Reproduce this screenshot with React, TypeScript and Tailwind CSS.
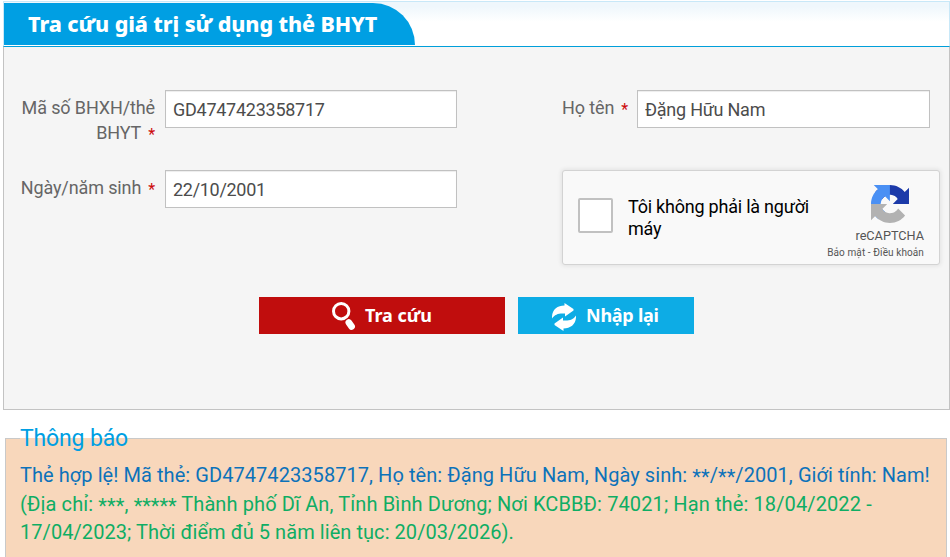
import type { ReactNode } from "react";

function Label({ children, className }: { children: ReactNode; className: string }) {
  return (
    <label className={`block shrink-0 whitespace-nowrap text-right text-[18px] leading-[25px] tracking-[-0.120px] text-[#666] ${className}`}>
      {children}
    </label>
  );
}

function Required({ className }: { className: string }) {
  return <span className={`relative top-px text-[16px] leading-none text-[#cc0a0a] ${className}`}>*</span>;
}

function TextField({ value, className }: { value: string; className: string }) {
  return (
    <input
      defaultValue={value}
      className={`h-[38px] border border-[#c1c1c1] bg-white pl-[7px] pt-px text-[18px] text-[#4c4c4c] shadow-[inset_0_1px_1px_rgba(0,0,0,0.075)] outline-none ${className}`}
    />
  );
}

function Masked({ children, className }: { children: ReactNode; className?: string }) {
  return <span className={`relative top-[2px] ${className ?? ""}`}>{children}</span>;
}

function RecaptchaLogo() {
  return (
    <svg width="38" height="38" viewBox="0 0 64 64" className="block">
      <path
        d="M64 31.955l-.033-1.37V4.687l-7.16 7.16C50.948 4.674 42.033.093 32.05.093c-10.4 0-19.622 4.96-25.458 12.64l11.736 11.86a15.55 15.55 0 0 1 4.754-5.334c2.05-1.6 4.952-2.906 8.968-2.906.485 0 .86.057 1.135.163 4.976.393 9.288 3.14 11.828 7.124l-8.307 8.307L64 31.953"
        fill="#1c3aa9"
      />
      <path
        d="M31.862.094l-1.37.033H4.594l7.16 7.16C4.58 13.147 0 22.06 0 32.046c0 10.4 4.96 19.622 12.64 25.458L24.5 45.768a15.55 15.55 0 0 1-5.334-4.754c-1.6-2.05-2.906-4.952-2.906-8.968 0-.485.057-.86.163-1.135.393-4.976 3.14-9.288 7.124-11.828l8.307 8.307L31.86.095"
        fill="#4a90f4"
      />
      <path
        d="M.001 32.045l.033 1.37v25.898l7.16-7.16c5.86 7.173 14.774 11.754 24.76 11.754 10.4 0 19.622-4.96 25.458-12.64l-11.736-11.86a15.55 15.55 0 0 1-4.754 5.334c-2.05 1.6-4.952 2.906-8.968 2.906-.485 0-.86-.057-1.135-.163-4.976-.393-9.288-3.14-11.828-7.124l8.307-8.307c-10.522.04-22.4.066-27.295-.005"
        fill="#b2b2b2"
      />
    </svg>
  );
}

function SearchIcon() {
  return (
    <svg width="25" height="29" viewBox="0 0 25 29" className="shrink-0">
      <circle cx="9.200" cy="9.200" r="7.700" fill="none" stroke="#fff" strokeWidth="3" />
      <path d="M16.800 20.500L19.600 24.500" stroke="#fff" strokeWidth="6.600" strokeLinecap="round" />
    </svg>
  );
}

function RefreshIcon() {
  return (
    <svg width="24" height="28" viewBox="0 0 24 28" fill="#fff" className="shrink-0">
      <path d="M0 15.500C-.5 7 5 2.500 12.500 2.500V0L21.500 6V7.500L13 13.500V10.500C7 10 3 11 0 15.500Z" />
      <path d="M24 12.500C24.500 21 19 25.500 11.500 25.500V28L2.500 22V20.500L11 14.500V17.500C17 18 21 17 24 12.500Z" />
    </svg>
  );
}

export default function App() {
  return (
    <div className="h-[557px] w-[950px] overflow-hidden bg-white pl-[3px] pt-px font-[Roboto,'Liberation_Sans',sans-serif]">
      <header className="h-[45px] border border-b-0 border-[#c8e8f8] bg-linear-to-b from-[#eff7fc] from-10% to-white to-45% pt-px">
        <h1 className="h-[42px] w-[411px] rounded-tr-[42px] bg-[#009fe3] pl-[24px] font-['Noto_Sans',sans-serif] text-[21.500px] font-extrabold leading-[42px] tracking-[-0.100px] whitespace-nowrap text-white">
          Tra cứu giá trị sử dụng thẻ BHYT
        </h1>
      </header>

      <form className="flex h-[364px] flex-col border border-t-[#009fda] border-[#c3c3c3] bg-[#f5f5f5] pt-[43px]">
        <div className="flex h-[177px] items-start">
          <div className="flex w-[453px] shrink-0 flex-col gap-[30px]">
            <div className="flex h-[50px] items-start justify-between">
              <Label className="w-[151px] pt-[5px]">
                Mã số BHXH/thẻ
                <br />
                BHYT<Required className="ml-[7px]" />
              </Label>
              <TextField value="GD4747423358717" className="w-[292px] tracking-[-0.260px]" />
            </div>
            <div className="flex items-start justify-between">
              <Label className="w-[151px] pt-[5px]">
                Ngày/năm sinh<Required className="ml-[7px]" />
              </Label>
              <TextField value="22/10/2001" className="w-[292px] tracking-[-0.300px]" />
            </div>
          </div>

          <div className="ml-[105px] flex w-[378px] shrink-0 flex-col gap-[42px]">
            <div className="flex items-start gap-[11px]">
              <Label className="w-[64px] pt-[5px]">
                Họ tên<Required className="ml-[7px]" />
              </Label>
              <TextField value="Đặng Hữu Nam" className="w-[293px] tracking-[-0.250px]" />
            </div>
            <div className="flex h-[95px] rounded-[3px] border border-[#d3d3d3] bg-[#f9f9f9] shadow-[0_0_4px_1px_rgba(0,0,0,0.08)]">
              <div className="ml-[15px] mt-[27px] size-[35px] shrink-0 rounded-[2px] border-2 border-[#c1c1c1] bg-white" />
              <p className="ml-[15px] mt-[25px] w-[199px] text-[18px] leading-[22px] tracking-[-0.220px] text-black">
                Tôi không phải là người
                <br />
                máy
              </p>
              <div className="flex w-[97px] flex-col items-end pt-[14px] text-[#555]">
                <div className="mr-[15px]">
                  <RecaptchaLogo />
                </div>
                <span className="mt-[4px] text-[12.700px] leading-[18px]">reCAPTCHA</span>
                <span className="whitespace-nowrap text-[10px] leading-[16px] tracking-[0.100px]">Bảo mật - Điều khoản</span>
              </div>
            </div>
          </div>
        </div>

        <div className="mt-[30px] flex gap-[13px] pl-[255px] font-['Noto_Sans',sans-serif] text-[18px] font-bold tracking-[-0.050px] text-white">
          <button type="button" className="flex h-[37px] w-[246px] items-center bg-[#c00d0d] pl-[73px] pt-[2px]">
            <SearchIcon />
            <span className="-mt-[2px] ml-[8px]">Tra cứu</span>
          </button>
          <button type="button" className="flex h-[37px] w-[176px] items-center bg-[#0dace5] pl-[34px] pt-[2px] tracking-[-0.250px]">
            <RefreshIcon />
            <span className="-mt-[2px] ml-[10px]">Nhập lại</span>
          </button>
        </div>
      </form>

      <fieldset className="mt-[14px] ml-[2px] h-[160px] w-[942px] border border-[#c9c9c9] bg-[#f8d7bb] pl-[14px]">
        <legend className="text-[23px] leading-[28px] tracking-[-0.150px] text-[#009fe3]">
          <span className="relative top-px">Thông báo</span>
        </legend>
        <div className="mt-[9px] whitespace-nowrap text-[20px] leading-[28.500px]">
          <p className="tracking-[0.063px] text-[#0c72ba]">
            Thẻ hợp lệ! Mã thẻ: GD4747423358717, Họ tên: Đặng Hữu Nam, Ngày sinh: <Masked>**</Masked>/<Masked>**</Masked>
            /2001, Giới tính: Nam!
          </p>
          <p className="text-[#0fad64]">
            <span className="tracking-[0.115px]">
              (Địa chỉ: <Masked>***</Masked>, <Masked className="tracking-[-0.050px]">*****</Masked> Thành phố Dĩ An, Tỉnh
              Bình Dương; Nơi KCBBĐ: 74021; Hạn thẻ: 18/04/2022 -
            </span>
            <br />
            <span className="tracking-[0.060px]">17/04/2023; Thời điểm đủ 5 năm liên tục: 20/03/2026).</span>
          </p>
        </div>
      </fieldset>
    </div>
  );
}
